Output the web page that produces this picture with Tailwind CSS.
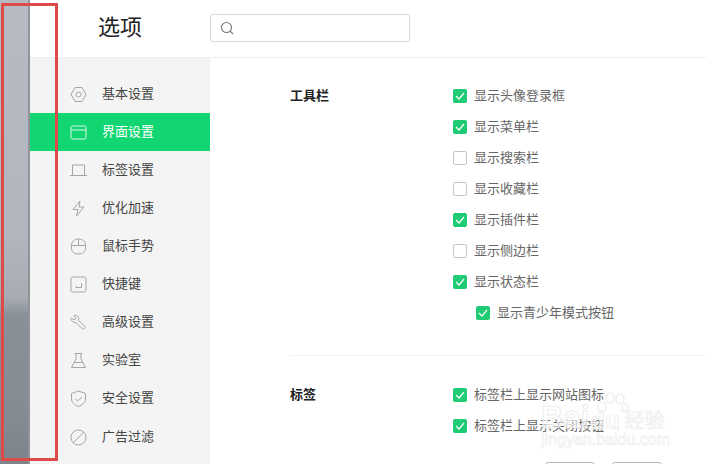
<!DOCTYPE html>
<html lang="zh">
<head>
  <meta charset="UTF-8">
  <title>选项</title>
  <script src="https://cdn.jsdelivr.net/npm/@tailwindcss/browser@4"></script>
</head>
<body class="relative w-[706px] h-[464px] overflow-hidden bg-white font-['Liberation_Sans','Noto_Sans_CJK_SC',sans-serif]">
  <div class="flex h-full">
    <!-- blurred desktop behind the window -->
    <div class="w-[30px] h-full shrink-0 border-r-[2px] border-[#8f949a] bg-[linear-gradient(to_bottom,#b6bbc3_0%,#b2b7bf_50%,#a8adb4_64%,#8a9098_68%,#858b93_90%,#7d8389_100%)]"></div>

    <div class="flex-1 flex flex-col min-w-0">
      <header class="h-[58px] shrink-0 flex items-start pt-[14px] border-b border-[#efefef]">
        <h1 class="w-[180px] pl-[68px] pt-[3px] text-[22px] text-[#222] leading-none">选项</h1>
        <div class="w-[200px] h-[28px] flex items-center pl-[9px] border border-[#d8d8d8] rounded-[3px]">
          <svg class="w-[14px] h-[14px]" viewBox="0 0 14 14" fill="none" stroke="#777" stroke-width="1.1"><circle cx="6.5" cy="6.5" r="5"/><path d="M10.2 10.2 13 13"/></svg>
        </div>
      </header>

      <div class="flex-1 flex min-h-0">
        <nav class="w-[180px] shrink-0 bg-[#f4f4f4] pt-[17px] text-[13px] text-[#444]">
          <a class="h-[38px] flex items-center gap-[15px] pl-[40px]">
            <svg class="w-[17px] h-[17px]" viewBox="0 0 17 17" fill="none" stroke="#a5a5a5"><path d="M5 1.500h7L16 8.500 12 15.500H5L1 8.500z"/><circle cx="8.500" cy="8.500" r="2.500"/></svg>
            <span>基本设置</span>
          </a>
          <a class="h-[38px] flex items-center gap-[15px] pl-[40px] bg-[#12d672] text-white">
            <svg class="w-[17px] h-[17px]" viewBox="0 0 17 17" fill="none" stroke="#d6f8e6"><rect x="1" y="2" width="15" height="13" rx="1.500"/><path d="M1 6h15"/></svg>
            <span>界面设置</span>
          </a>
          <a class="h-[38px] flex items-center gap-[15px] pl-[40px]">
            <svg class="w-[17px] h-[17px]" viewBox="0 0 17 17" fill="none" stroke="#a5a5a5"><path d="M2.500 13V3h12v10M0 13.500h17"/></svg>
            <span>标签设置</span>
          </a>
          <a class="h-[38px] flex items-center gap-[15px] pl-[40px]">
            <svg class="w-[17px] h-[17px]" viewBox="0 0 17 17" fill="none" stroke="#a5a5a5"><path d="M10 1 3 9.500h5L6.500 16 14 7H9z"/></svg>
            <span>优化加速</span>
          </a>
          <a class="h-[38px] flex items-center gap-[15px] pl-[40px]">
            <svg class="w-[17px] h-[17px]" viewBox="0 0 17 17" fill="none" stroke="#a5a5a5"><path d="M1.500 7.500C1.500 3.500 4.500 1 8.500 1s7 2.500 7 6.500V10c0 4-3 6-7 6s-7-2-7-6zM1.500 7.500h14M8.500 1v6.500"/></svg>
            <span>鼠标手势</span>
          </a>
          <a class="h-[38px] flex items-center gap-[15px] pl-[40px]">
            <svg class="w-[17px] h-[17px]" viewBox="0 0 17 17" fill="none" stroke="#a5a5a5"><rect x="1" y="1" width="15" height="15" rx="1.500"/><path d="M11.500 7v4.500H6M6 10v1.500"/></svg>
            <span>快捷键</span>
          </a>
          <a class="h-[38px] flex items-center gap-[15px] pl-[40px]">
            <svg class="w-[17px] h-[17px]" viewBox="0 0 17 17" fill="none" stroke="#a5a5a5"><path d="M6.500 1.500 4.500 1l-.5.500 2 2.500-2 2-2.500-2L1 4.500C1 7 3.500 9 6 8.500l6.500 6.500c1 1 3.500-1 2.500-2.500L8.500 6.500C9 4 8.500 2.500 6.500 1.500z"/></svg>
            <span>高级设置</span>
          </a>
          <a class="h-[38px] flex items-center gap-[15px] pl-[40px]">
            <svg class="w-[17px] h-[17px]" viewBox="0 0 17 17" fill="none" stroke="#a5a5a5"><path d="M4.500 1.500h8M6 1.500V7L1.500 15.500h14L11 7V1.500M4.500 10.500h8"/></svg>
            <span>实验室</span>
          </a>
          <a class="h-[38px] flex items-center gap-[15px] pl-[40px]">
            <svg class="w-[17px] h-[17px]" viewBox="0 0 17 17" fill="none" stroke="#a5a5a5"><path d="M8.500 1 15.500 3.500V9c0 3.500-3 6-7 7.500-4-1.500-7-4-7-7.500V3.500z"/><path d="m5 8.500 2.500 2.500 4.500-4"/></svg>
            <span>安全设置</span>
          </a>
          <a class="h-[38px] mt-px flex items-center gap-[15px] pl-[40px]">
            <svg class="w-[17px] h-[17px]" viewBox="0 0 17 17" fill="none" stroke="#a5a5a5"><circle cx="8.500" cy="8.500" r="7.500"/><path d="M3.200 13.800 13.800 3.200"/></svg>
            <span>广告过滤</span>
          </a>
        </nav>

        <main class="flex-1 pl-[80px] pt-[22px] text-[13px] min-w-0">
          <section class="flex pb-[27px] border-b border-[#f2f2f2]">
            <h2 class="w-[163px] h-[31px] flex items-center font-bold text-[#222]">工具栏</h2>
            <div class="text-[#666]">
              <label class="h-[31px] flex items-center gap-[7px]"><span class="w-[14px] h-[14px] rounded-[2px] bg-[#1fcb74] flex items-center justify-center"><svg class="w-[10px] h-[10px]" viewBox="0 0 10 10" fill="none" stroke="#fff" stroke-width="1.200"><path d="m1 5 3 3 5-6"/></svg></span>显示头像登录框</label>
              <label class="h-[31px] flex items-center gap-[7px]"><span class="w-[14px] h-[14px] rounded-[2px] bg-[#1fcb74] flex items-center justify-center"><svg class="w-[10px] h-[10px]" viewBox="0 0 10 10" fill="none" stroke="#fff" stroke-width="1.200"><path d="m1 5 3 3 5-6"/></svg></span>显示菜单栏</label>
              <label class="h-[31px] flex items-center gap-[7px]"><span class="w-[14px] h-[14px] rounded-[2px] border border-[#c4c4c4]"></span>显示搜索栏</label>
              <label class="h-[31px] flex items-center gap-[7px]"><span class="w-[14px] h-[14px] rounded-[2px] border border-[#c4c4c4]"></span>显示收藏栏</label>
              <label class="h-[31px] flex items-center gap-[7px]"><span class="w-[14px] h-[14px] rounded-[2px] bg-[#1fcb74] flex items-center justify-center"><svg class="w-[10px] h-[10px]" viewBox="0 0 10 10" fill="none" stroke="#fff" stroke-width="1.200"><path d="m1 5 3 3 5-6"/></svg></span>显示插件栏</label>
              <label class="h-[31px] flex items-center gap-[7px]"><span class="w-[14px] h-[14px] rounded-[2px] border border-[#c4c4c4]"></span>显示侧边栏</label>
              <label class="h-[31px] flex items-center gap-[7px]"><span class="w-[14px] h-[14px] rounded-[2px] bg-[#1fcb74] flex items-center justify-center"><svg class="w-[10px] h-[10px]" viewBox="0 0 10 10" fill="none" stroke="#fff" stroke-width="1.200"><path d="m1 5 3 3 5-6"/></svg></span>显示状态栏</label>
              <label class="h-[31px] flex items-center gap-[7px] pl-[23px]"><span class="w-[14px] h-[14px] rounded-[2px] bg-[#1fcb74] flex items-center justify-center"><svg class="w-[10px] h-[10px]" viewBox="0 0 10 10" fill="none" stroke="#fff" stroke-width="1.200"><path d="m1 5 3 3 5-6"/></svg></span>显示青少年模式按钮</label>
            </div>
          </section>
          <section class="flex pt-[23px]">
            <h2 class="w-[163px] h-[31px] flex items-center font-bold text-[#222]">标签</h2>
            <div class="text-[#666]">
              <label class="h-[31px] flex items-center gap-[7px]"><span class="w-[14px] h-[14px] rounded-[2px] bg-[#1fcb74] flex items-center justify-center"><svg class="w-[10px] h-[10px]" viewBox="0 0 10 10" fill="none" stroke="#fff" stroke-width="1.200"><path d="m1 5 3 3 5-6"/></svg></span>标签栏上显示网站图标</label>
              <label class="h-[31px] flex items-center gap-[7px]"><span class="w-[14px] h-[14px] rounded-[2px] bg-[#1fcb74] flex items-center justify-center"><svg class="w-[10px] h-[10px]" viewBox="0 0 10 10" fill="none" stroke="#fff" stroke-width="1.200"><path d="m1 5 3 3 5-6"/></svg></span>标签栏上显示关闭按钮</label>
              <div class="flex gap-[17px] pl-[92px] pt-[21px]">
                <span class="w-[50px] h-[20px] shrink-0 border border-[#b8b8b8] rounded-[3px]"></span>
                <span class="w-[50px] h-[20px] shrink-0 border border-[#b8b8b8] rounded-[3px]"></span>
              </div>
            </div>
          </section>
        </main>
      </div>
    </div>
  </div>

  <!-- red annotation box -->
  <div class="absolute left-[1px] top-[3px] w-[57px] h-[458px] border-[3px] border-[#dc4a4a]"></div>

  <!-- baidu watermark -->
  <div class="absolute left-[541px] top-[405px] w-[130px] h-[46px] leading-none text-white/60 [-webkit-text-stroke:1px_#eeeeee]">
    <div class="flex items-end h-[28px]">
      <span class="text-[31px] font-bold">Bai</span>
      <span class="text-[24px] font-bold ml-[1px]">du</span>
      <span class="text-[20px] ml-[5px] mb-[2px] text-white/80 [-webkit-text-stroke:0.5px_#e8e8e8]">经验</span>
    </div>
    <div class="text-[16px] mt-[-1px] whitespace-nowrap [-webkit-text-stroke:0.6px_#ececec]">jingyan.baidu.com</div>
    <svg class="absolute left-[52px] top-[-13px] w-[36px] h-[32px]" viewBox="0 0 36 32" fill="none" stroke="#eeeeee" stroke-width="1.500"><ellipse cx="9" cy="15" rx="4" ry="5"/><ellipse cx="17" cy="6" rx="4" ry="5"/><ellipse cx="27" cy="7" rx="4" ry="5"/><ellipse cx="32" cy="16" rx="3" ry="4"/></svg>
  </div>
</body>
</html>
